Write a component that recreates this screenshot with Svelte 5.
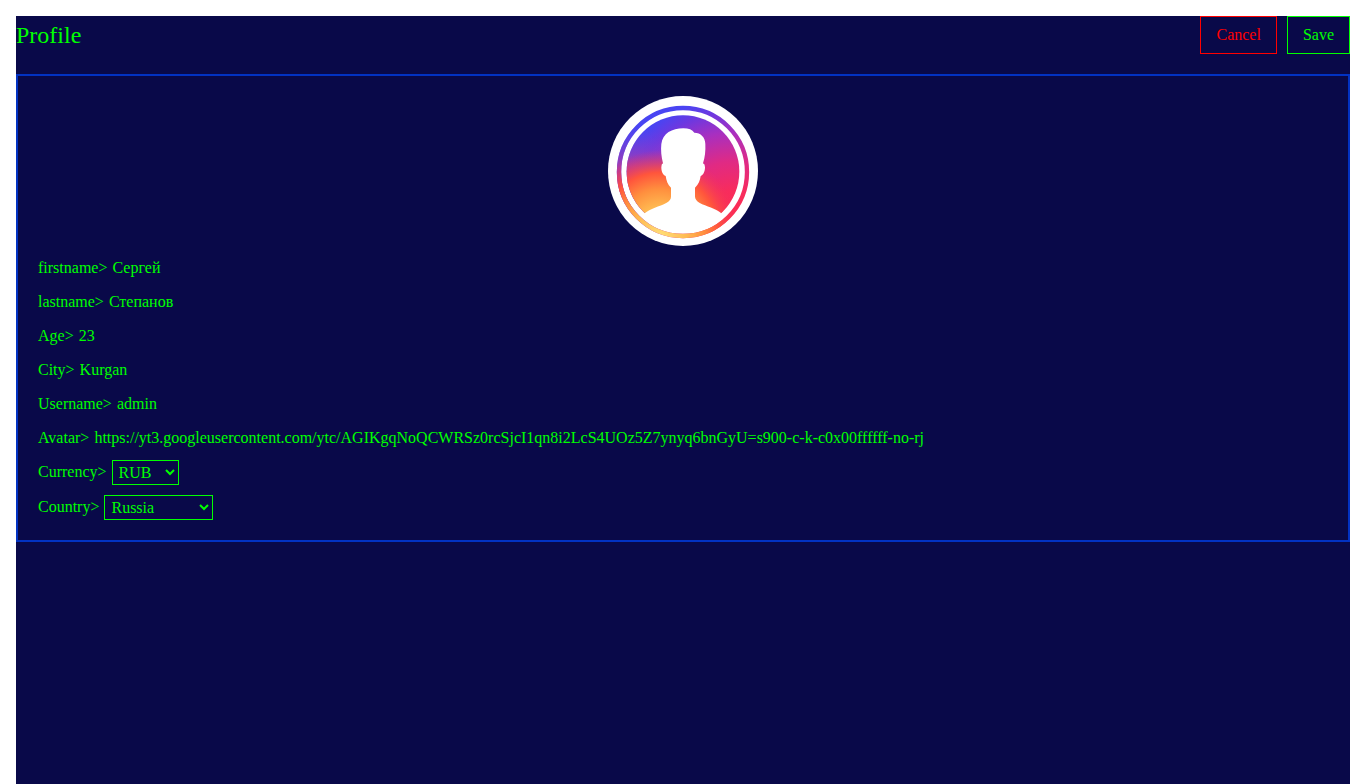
<script>
  let fields = $state([
    { id: 'firstname', label: 'firstname', value: 'Сергей' },
    { id: 'lastname', label: 'lastname', value: 'Степанов' },
    { id: 'age', label: 'Age', value: '23' },
    { id: 'city', label: 'City', value: 'Kurgan' },
    { id: 'username', label: 'Username', value: 'admin' },
    {
      id: 'avatar',
      label: 'Avatar',
      value:
        'https://yt3.googleusercontent.com/ytc/AGIKgqNoQCWRSz0rcSjcI1qn8i2LcS4UOz5Z7ynyq6bnGyU=s900-c-k-c0x00ffffff-no-rj'
    }
  ]);
  let currency = $state('RUB');
  let country = $state('Russia');
  const currencies = ['RUB', 'EUR', 'USD'];
  const countries = ['Armenia', 'Russia', 'Belarus', 'Kazakhstan', 'Ukraine'];
  const layers = ['cool', 'tint', 'warm'];
</script>

<main class="page">
  <header class="header">
    <h1>Profile</h1>
    <div class="actions">
      <button type="button" class="cancel">Cancel</button>
      <button type="button">Save</button>
    </div>
  </header>

  <form class="card">
    <svg class="avatar" viewBox="24 18 450 450" role="img" aria-label="Avatar">
      <defs>
        <radialGradient id="cool" gradientUnits="userSpaceOnUse" cx="400" cy="400" r="440">
          <stop offset="0" stop-color="#ff2d50" />
          <stop offset="0.22" stop-color="#f82c5c" />
          <stop offset="0.42" stop-color="#e02a84" />
          <stop offset="0.62" stop-color="#a82fc0" />
          <stop offset="0.76" stop-color="#6c38e0" />
          <stop offset="0.86" stop-color="#4a44f2" />
          <stop offset="1" stop-color="#4646f4" />
        </radialGradient>
        <radialGradient id="tint" gradientUnits="userSpaceOnUse" cx="80" cy="280" r="180">
          <stop offset="0" stop-color="#d03880" />
          <stop offset="0.3" stop-color="#b43aa4" stop-opacity="0.85" />
          <stop offset="1" stop-color="#6c40e0" stop-opacity="0" />
        </radialGradient>
        <radialGradient
          id="warm"
          gradientUnits="userSpaceOnUse"
          cx="0"
          cy="0"
          r="1"
          gradientTransform="translate(180 440) scale(240 260)"
        >
          <stop offset="0" stop-color="#ffdf78" />
          <stop offset="0.35" stop-color="#ffb850" />
          <stop offset="0.55" stop-color="#ff8f3e" />
          <stop offset="0.74" stop-color="#ff553c" />
          <stop offset="1" stop-color="#f03060" stop-opacity="0" />
        </radialGradient>
      </defs>
      <circle cx="249" cy="243" r="225" fill="#fff" />
      {#each layers as layer}
        <circle cx="249" cy="246" r="192" fill="none" stroke="url(#{layer})" stroke-width="13" />
        <circle cx="249" cy="245" r="169" fill="url(#{layer})" />
      {/each}
      <path
        fill="#fff"
        d="M134 370C150 355 178 350 200 338Q213 331 213 320V293C203 284 199 272 197 258C188 255 184 244 184 232Q184 222 189 220C184 200 182 180 184 162C188 130 216 115 250 115Q274 115 283 128C302 128 316 142 316 162C317 182 315 202 309 220Q315 222 315 232C315 244 310 256 302 258C300 272 296 283 285 293V320Q286 331 298 338C320 350 346 354 364 370C342 400 310 427 249 427C190 427 154 398 134 370Z"
      />
    </svg>

    {#each fields as field (field.id)}
      <div class="row">
        <label for={field.id}>{field.label}&gt;</label>
        <input id={field.id} type="text" bind:value={field.value} />
      </div>
    {/each}

    <div class="row">
      <label for="currency">Currency&gt;</label>
      <select id="currency" bind:value={currency}>
        {#each currencies as item}<option>{item}</option>{/each}
      </select>
    </div>
    <div class="row">
      <label for="country">Country&gt;</label>
      <select id="country" bind:value={country}>
        {#each countries as item}<option>{item}</option>{/each}
      </select>
    </div>
  </form>
</main>

<style>
  :global(body) {
    background: #fff;
  }

  .page {
    box-sizing: border-box;
    min-height: calc(100vh - 16px);
    margin: 16px 0 0 16px;
    background: #090949;
    color: #0f0;
    font: 16px/24px 'Liberation Serif', 'Times New Roman', serif;
    display: flow-root;
  }

  :global(#app) {
    display: flow-root;
  }

  .header {
    display: flex;
    justify-content: space-between;
    align-items: center;
    margin-bottom: 20px;
  }

  h1 {
    margin: 0;
    font-size: 24px;
    line-height: 32px;
    font-weight: 400;
  }

  .actions {
    display: flex;
    gap: 10px;
  }

  button {
    padding: 6px 15px;
    border: 1px solid currentColor;
    background: none;
    color: inherit;
    font: inherit;
    cursor: pointer;
  }

  .cancel {
    color: #f00;
  }

  .card {
    display: flex;
    flex-direction: column;
    gap: 10px;
    padding: 20px;
    border: 2px solid #0232c2;
  }

  .avatar {
    width: 150px;
    height: 150px;
    align-self: center;
  }

  .row {
    display: flex;
    gap: 5px;
  }

  input {
    flex: 1;
    min-width: 0;
    height: 24px;
    padding: 0;
    border: 0;
    outline: 0;
    background: none;
    color: inherit;
    font: inherit;
  }

  select {
    height: 25px;
    padding: 0 10px 0 2px;
    border: 1px solid #0f0;
    border-radius: 0;
    background: #090949;
    color: inherit;
    font: inherit;
  }
</style>
